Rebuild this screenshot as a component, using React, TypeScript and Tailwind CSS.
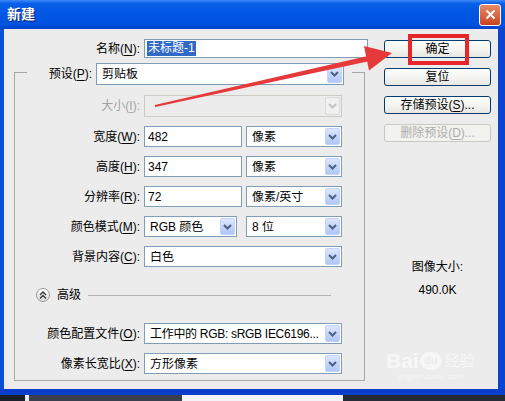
import React from 'react';

const FONT = "font-['Liberation_Sans','Noto_Sans_CJK_SC',sans-serif]";

const Chevron = ({ disabled }: { disabled?: boolean }) => (
  <svg width="9" height="6" viewBox="0 0 9 6">
    <path d="M1 1l3.5 3.5L8 1" fill="none" stroke={disabled ? '#c4c4c4' : '#4d6185'} strokeWidth="2" />
  </svg>
);

const Select = ({ value, width, disabled, tall }: { value: React.ReactNode; width: string; disabled?: boolean; tall?: boolean }) => (
  <div
    className={`flex ${tall ? 'h-[22px]' : 'h-[21px]'} ${width} items-center border ${
      disabled ? 'border-[#cbcbc4] bg-[#ececec]' : 'border-[#7f9db9] bg-white'
    }`}
  >
    <span className="flex-1 overflow-hidden whitespace-nowrap pl-[5px] text-[12px] leading-none text-black">{value}</span>
    <div
      className={`mr-px flex h-[calc(100%-2px)] w-[15px] shrink-0 items-center justify-center rounded-[2px] border ${
        disabled ? 'border-[#dcdcdc] bg-[#f0f0f0]' : 'border-[#c3d3fd] bg-gradient-to-b from-[#dce6fd] to-[#b0c6f6]'
      }`}
    >
      <Chevron disabled={disabled} />
    </div>
  </div>
);

const Input = ({ value, width }: { value: string; width: string }) => (
  <div className={`flex h-[21px] ${width} items-center border border-[#7f9db9] bg-white pl-[3px] text-[12px] leading-none`}>
    {value}
  </div>
);

const Label = ({ text, k, disabled }: { text: string; k: string; disabled?: boolean }) => (
  <span className={`w-[129px] pr-[4px] text-right text-[12px] ${disabled ? 'text-[#a3a3a3]' : 'text-black'}`}>
    {text}(<u className="underline-offset-2">{k}</u>):
  </span>
);

const XpButton = ({ children, disabled }: { children: React.ReactNode; disabled?: boolean }) => (
  <div
    className={`flex h-[18px] w-[107px] items-center justify-center rounded-[3px] border text-[12px] ${
      disabled
        ? 'border-[#c9c9c2] bg-[#f2f2ee] text-[#adadad]'
        : 'border-[#003c74] bg-gradient-to-b from-white to-[#e8e8e2] text-black'
    }`}
  >
    {children}
  </div>
);

export default function App() {
  return (
    <div className={`relative h-[401px] w-[505px] overflow-hidden bg-[#1e222c] ${FONT}`}>
      {/* title bar */}
      <div className="flex h-[29px] items-center justify-between bg-[linear-gradient(to_bottom,#3d8bf5_0%,#0a5fe8_12%,#0055e3_50%,#0053df_85%,#0040c8_100%)] pl-[7px] pr-[4px]">
        <span className="text-[14px] font-bold text-white [text-shadow:1px_1px_0_#0a1f6e]">新建</span>
        <div className="flex h-[22px] w-[22px] items-center justify-center rounded-[3px] border border-white bg-gradient-to-b from-[#e88a66] to-[#c8421c]">
          <svg width="11" height="11" viewBox="0 0 11 11">
            <path d="M1.5 1.5l8 8M9.5 1.5l-8 8" stroke="white" strokeWidth="2" />
          </svg>
        </div>
      </div>

      {/* frame + body */}
      <div className="flex">
        <div className="w-[4px] bg-[#0a4fd8]" />
        <div className="flex h-[360px] w-[494px] bg-[#ececec] text-[12px]">
          {/* form column */}
          <div className="w-[368px] pt-[10px]">
            <div className="flex h-[19px] items-center">
              <span className="w-[140px] pr-[4px] text-right">
                名称(<u className="underline-offset-2">N</u>):
              </span>
              <div className="flex h-[19px] w-[224px] items-center border border-[#7f9db9] bg-white pl-[2px]">
                <span className="bg-[#316ac5] px-px leading-[15px] text-white">未标题-1</span>
              </div>
            </div>

            <div className="ml-[10px] mt-[14px] h-[309px] w-[351px] border border-[#a7a7a7]">
              <div className="-mt-[10px] ml-[12px] flex h-[22px] w-[325px] items-center bg-[#ececec]">
                <span className="w-[68px] pr-[3px] text-right">
                  预设(<u className="underline-offset-2">P</u>):
                </span>
                <div className="ml-[1px]">
                  <Select value="剪贴板" width="w-[248px]" tall />
                </div>
              </div>

              <div className="mt-[10px] flex h-[22px] items-center">
                <Label text="大小" k="I" disabled />
                <Select value="" width="w-[198px]" disabled tall />
              </div>

              <div className="mt-[9px] flex h-[21px] items-center">
                <Label text="宽度" k="W" />
                <Input value="482" width="w-[98px]" />
                <div className="ml-[4px]">
                  <Select value="像素" width="w-[96px]" />
                </div>
              </div>

              <div className="mt-[9px] flex h-[21px] items-center">
                <Label text="高度" k="H" />
                <Input value="347" width="w-[98px]" />
                <div className="ml-[4px]">
                  <Select value="像素" width="w-[96px]" />
                </div>
              </div>

              <div className="mt-[9px] flex h-[21px] items-center">
                <Label text="分辨率" k="R" />
                <Input value="72" width="w-[98px]" />
                <div className="ml-[4px]">
                  <Select value="像素/英寸" width="w-[96px]" />
                </div>
              </div>

              <div className="mt-[9px] flex h-[21px] items-center">
                <Label text="颜色模式" k="M" />
                <Select value="RGB 颜色" width="w-[93px]" />
                <div className="ml-[9px]">
                  <Select value="8 位" width="w-[96px]" />
                </div>
              </div>

              <div className="mt-[9px] flex h-[21px] items-center">
                <Label text="背景内容" k="C" />
                <Select value="白色" width="w-[198px]" />
              </div>

              <div className="mt-[21px] flex h-[14px] items-center pl-[21px] pr-[33px]">
                <div className="flex h-[14px] w-[14px] items-center justify-center rounded-full border border-[#9a9a9a] bg-gradient-to-b from-white to-[#dcdcdc]">
                  <svg width="8" height="8" viewBox="0 0 8 8">
                    <path d="M1 4l3-3 3 3M1 7.5l3-3 3 3" fill="none" stroke="#333" strokeWidth="1.3" />
                  </svg>
                </div>
                <span className="ml-[7px]">高级</span>
                <div className="ml-[7px] h-px flex-1 bg-[#b3b3b3]" />
              </div>

              <div className="mt-[21px] flex h-[21px] items-center">
                <Label text="颜色配置文件" k="O" />
                <Select
                  value={<span className="tracking-[-0.3px]">工作中的 RGB: sRGB IEC6196...</span>}
                  width="w-[198px]"
                />
              </div>

              <div className="mt-[9px] flex h-[21px] items-center">
                <Label text="像素长宽比" k="X" />
                <Select value="方形像素" width="w-[198px]" />
              </div>
            </div>
          </div>

          {/* button column */}
          <div className="flex w-[119px] flex-col pl-[12px] pt-[11px]">
            <XpButton>确定</XpButton>
            <div className="mt-[10px]">
              <XpButton>复位</XpButton>
            </div>
            <div className="mt-[10px]">
              <XpButton>
                存储预设(<u className="underline-offset-2">S</u>)...
              </XpButton>
            </div>
            <div className="mt-[10px]">
              <XpButton disabled>
                删除预设(<u className="underline-offset-2">D</u>)...
              </XpButton>
            </div>
            <div className="mt-[117px] w-[107px] text-center leading-[16px]">图像大小:</div>
            <div className="mt-[7px] w-[107px] text-center leading-[16px]">490.0K</div>
          </div>
        </div>
        <div className="w-[7px] bg-[#0a45d0]" />
      </div>
      <div className="h-[6px] bg-[#0a3fcb]" />

      {/* what lies behind the dialog */}
      <div className="flex h-[6px]">
        <div className="w-[25px] bg-[#1b1f2a]" />
        <div className="w-[4px] bg-[#e9e9ec]" />
        <div className="w-[153px] bg-[#3a3f4d]" />
        <div className="w-[161px] bg-[#f4f4f6]" />
        <div className="flex-1 bg-[#262a35]" />
      </div>

      {/* red annotation */}
      <div className="pointer-events-none absolute left-[408px] top-[34px] h-[31px] w-[61px] border-[4px] border-[#e6262b]" />
      <svg className="pointer-events-none absolute left-0 top-0" width="505" height="401" viewBox="0 0 505 401">
        <polygon points="155.2,107 154.8,105 366.5,56.3 367.5,61.4" fill="#e6393b" />
        <polygon points="364,46 392,53 369,70.5" fill="#e6393b" />
      </svg>

      {/* watermark */}
      <div className="pointer-events-none absolute left-[386px] top-[350px] flex flex-col items-center text-white/60">
        <div className="flex items-center leading-none">
          <span className="text-[21px] font-bold">Bai</span>
          <span className="ml-px flex h-[18px] w-[22px] items-center justify-center rounded-full bg-white/50 text-[11px] font-bold text-[#ececec]">
            du
          </span>
          <span className="ml-[3px] text-[15px]">经验</span>
        </div>
        <span className="mt-[2px] text-[8px] leading-none text-white/50">jingyan.baidu.com</span>
      </div>
    </div>
  );
}
